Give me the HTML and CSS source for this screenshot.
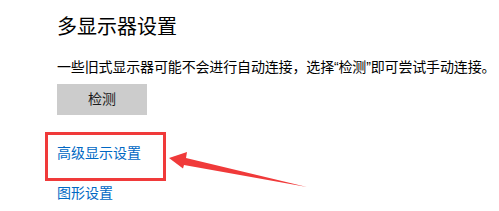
FILE: index.html
```html
<!doctype html>
<html>
    <head>
        <meta charset="utf-8">
        <link rel="stylesheet" href="styles.css">
    </head>
    <body>
        <div class="page">
            <h1 class="title">多显示器设置</h1>
            <p class="desc">一些旧式显示器可能不会进行自动连接，选择“检测”即可尝试手动连接。</p>
            <button class="btn">检测</button>
            <a class="link first" href="#">高级显示设置</a>
            <a class="link" href="#">图形设置</a>
        </div>

        <!-- annotation -->
        <div class="mark"></div>
        <svg class="arrow" width="499" height="211" viewBox="0 0 499 211">
            <polygon points="169,158 187,152 186,158 307,187 184,165 183,168.5" fill="#f03a3a"/>
        </svg>
    </body>
</html>
```

FILE: styles.css
```css
body {
    margin:0;
    background:#fff;
    color:#000;
    font-family:"Noto Sans CJK SC", sans-serif;
}

.page {
    padding:12px 0 0 57px;
    display:flex;
    flex-direction:column;
    align-items:flex-start;
}

.title {
    margin:0;
    font-size:20px;
    line-height:28px;
    font-weight:400;
}

.desc {
    margin:17px 0 0 0;
    font-family:"Liberation Sans", "Noto Sans CJK SC", sans-serif;
    font-size:14px;
    line-height:20px;
    letter-spacing:-0.15px;
    white-space:nowrap;
}

.btn {
    margin-top:7px;
    width:90px;
    height:31px;
    border:0;
    padding:0 0 3px 0;
    background:#cccccc;
    color:#1a1a1a;
    font-family:"Noto Sans CJK SC", sans-serif;
    font-size:14px;
}

.link {
    color:#0068c4;
    text-decoration:none;
    font-size:14px;
    line-height:20px;
    margin-top:20px;
}
.link.first { margin-top:27px; }

.mark {
    position:absolute;
    left:45px;
    top:132px;
    width:121px;
    height:49px;
    box-sizing:border-box;
    border:3px solid #f03a3a;
}

.arrow {
    position:absolute;
    left:0;
    top:0;
}
```
